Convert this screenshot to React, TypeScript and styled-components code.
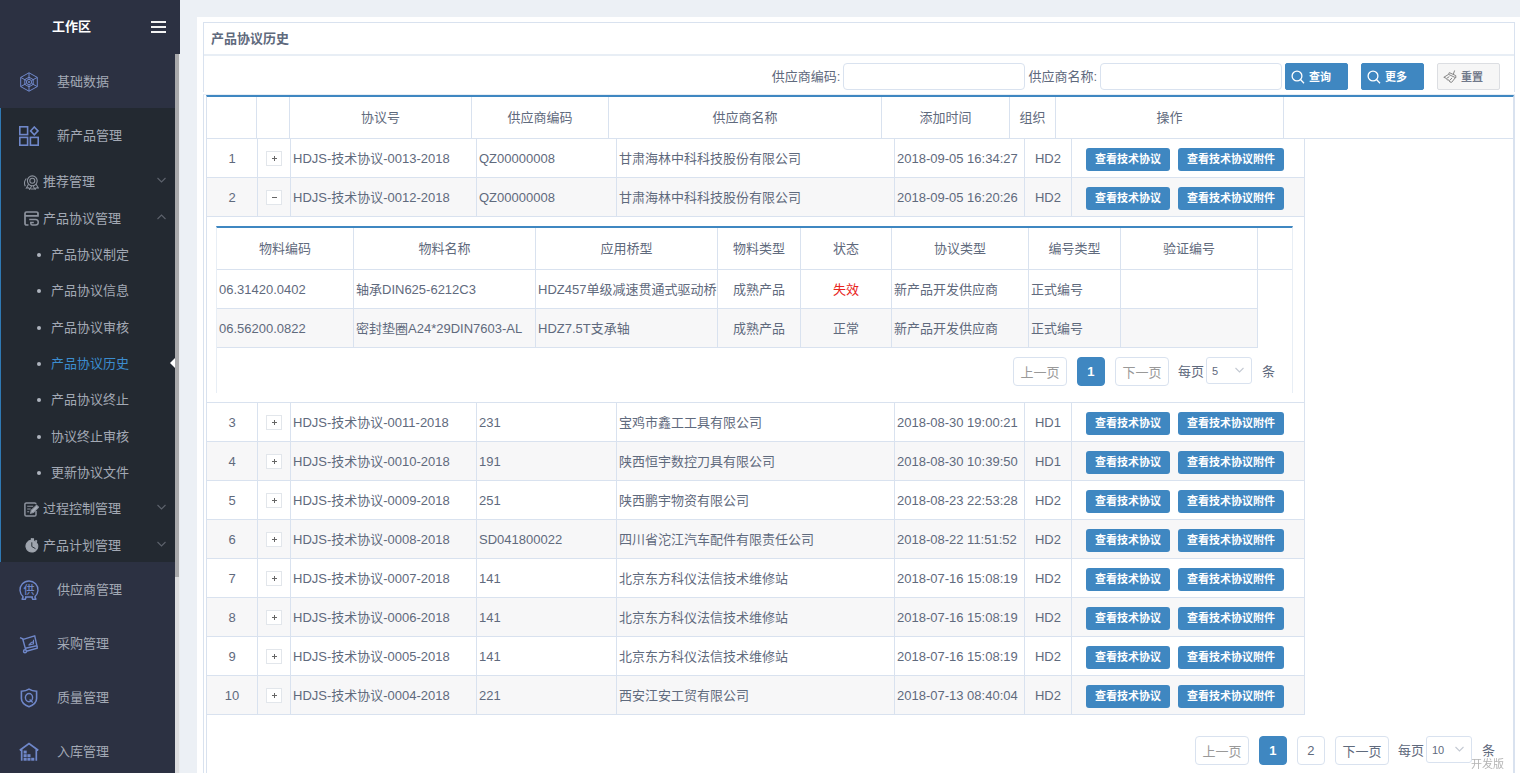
import React, { useState } from 'react';
import styled, { createGlobalStyle, css } from 'styled-components';

const c = {
  side: '#2c3142',
  sideDark: '#232931',
  sideText: '#a3a9b5',
  blue: '#3f87c1',
  text: '#5f6a7d',
  line: '#d9e2ef',
  soft: '#e8eef5',
  stripe: '#f7f7f8',
  icon: '#6f87c9',
};

const GlobalStyle = createGlobalStyle`
  *, *::before, *::after { box-sizing: border-box; }
  body {
    margin: 0;
    background: #ecf0f5;
    color: ${c.text};
    font-family: "Liberation Sans", "Noto Sans CJK SC", sans-serif;
    font-size: 13px;
    line-height: 18px;
  }
  button, input, select { font-family: inherit; color: inherit; margin: 0; }
  ul { list-style: none; margin: 0; padding: 0; }
  a { color: inherit; text-decoration: none; }
`;

const Shell = styled.div`
  display: flex;
  height: 100vh;
  overflow: hidden;
`;

/* ---------- sidebar ---------- */

const Sidebar = styled.aside`
  position: relative;
  display: flex;
  flex-direction: column;
  flex: none;
  width: 180px;
  background: ${c.side};
  color: ${c.sideText};
`;

const SideHead = styled.div`
  display: flex;
  align-items: center;
  justify-content: space-between;
  flex: none;
  height: 54px;
  padding: 0 14px 0 52px;
  color: #fff;
  font-weight: 700;
`;

const MenuToggle = styled.button`
  display: flex;
  padding: 0;
  border: 0;
  background: none;
`;

const Menu = styled.nav`
  flex: 1;
  min-height: 0;
  margin-right: 5px;
  overflow: hidden;
`;

const TopLink = styled.a`
  display: flex;
  align-items: center;
  gap: 18px;
  height: 54px;
  padding: 1px 0 0 19px;
  svg { flex: none; }
`;

const Group = styled.li<{ $open?: boolean }>`
  ${(p) => p.$open && css`
    background: ${c.sideDark};
    box-shadow: inset 1px 0 0 #2f79b3;
  `}
`;

const SubList = styled.ul`
  display: grid;
  grid-auto-rows: 1fr;
  height: 400px;
`;

const SubLink = styled.a`
  display: flex;
  align-items: center;
  gap: 4px;
  height: 100%;
  padding: 4px 9px 0 24px;
  svg { flex: none; }
  svg:last-child { margin: -4px 0 0 auto; }
`;

const LeafLink = styled.a<{ $active?: boolean }>`
  position: relative;
  display: flex;
  align-items: center;
  gap: 10px;
  height: 100%;
  padding: 4px 0 0 37px;
  color: ${(p) => (p.$active ? '#3c8dd0' : 'inherit')};
  &::before {
    content: '';
    width: 4px;
    height: 4px;
    border-radius: 2px;
    background: #aeb4be;
  }
`;

const ActiveMark = styled.span`
  position: absolute;
  right: 0;
  top: 14px;
  border: 5px solid transparent;
  border-left: 0;
  border-right-color: #fff;
`;

const ScrollTrack = styled.div`
  position: absolute;
  top: 54px;
  right: 0;
  bottom: 0;
  width: 5px;
  background: #dcdcde;
  border-right: 1px solid #e9ebee;
`;

const ScrollThumb = styled.div`
  height: 523px;
  background: #a9a9ab;
`;

/* ---------- content ---------- */

const Main = styled.main`
  flex: 1;
  min-width: 0;
  padding: 17px 0 0 17px;
  display: flex;
`;

const Sheet = styled.div`
  flex: 1;
  min-width: 0;
  padding: 5px 5px 0 6px;
  background: #fff;
`;

const Card = styled.section`
  border: 1px solid ${c.line};
  border-bottom: 0;
`;

const CardTitle = styled.h1`
  margin: 0;
  padding: 7px 7px 6px;
  border-bottom: 2px solid ${c.soft};
  font-size: 13px;
  line-height: 18px;
  font-weight: 700;
`;

const Filters = styled.form`
  display: flex;
  justify-content: flex-end;
  align-items: center;
  padding: 7px 14px 2px;
`;

const Field = styled.label`
  display: flex;
  align-items: center;
  gap: 3px;
  margin-right: 3px;
`;

const TextBox = styled.input`
  width: 182px;
  height: 27px;
  padding: 0 6px;
  border: 1px solid ${c.line};
  border-radius: 4px;
  font-size: 13px;
`;

const ToolButton = styled.button<{ $plain?: boolean }>`
  display: flex;
  align-items: center;
  gap: 4px;
  width: 63px;
  height: 27px;
  padding: 0 5px;
  border: 1px solid ${(p) => (p.$plain ? '#dcdee2' : c.blue)};
  border-radius: 2px;
  background: ${(p) => (p.$plain ? '#f6f6f6' : c.blue)};
  color: ${(p) => (p.$plain ? '#70788a' : '#fff')};
  font-size: 11px;
  line-height: 16px;
  font-weight: 700;
  white-space: nowrap;
  & + & { margin-left: 13px; }
`;

const GridBox = styled.section`
  margin-top: 2px;
  padding-left: 2px;
  border: 1px solid ${c.soft};
  border-color: ${c.soft} ${c.line} ${c.soft} ${c.line};
`;

const GridInner = styled.div`
  border-top: 2px solid ${c.blue};
  border-left: 1px solid ${c.line};
  border-right: 1px solid ${c.line};
  min-height: 100vh;
`;

const Table = styled.table<{ $full?: boolean }>`
  table-layout: fixed;
  border-collapse: separate;
  border-spacing: 0;
  width: ${(p) => (p.$full ? '100%' : '1px')};
`;

const Th = styled.th<{ $open?: boolean }>`
  height: 42px;
  padding: 0;
  border-bottom: 1px solid ${c.line};
  border-right: ${(p) => (p.$open ? 0 : `1px solid ${c.line}`)};
  font-weight: 400;
`;

const Tr = styled.tr<{ $striped?: boolean }>`
  background: ${(p) => (p.$striped ? c.stripe : '#fff')};
`;

const Td = styled.td<{ $center?: boolean; $open?: boolean; $alert?: boolean }>`
  height: 39px;
  padding: 2px 2px 0;
  border-right: 1px solid ${c.line};
  border-bottom: 1px solid ${c.line};
  text-align: ${(p) => (p.$center ? 'center' : 'left')};
  white-space: nowrap;
  overflow: hidden;
  ${(p) => p.$alert && css`color: #e8251c;`}
  ${(p) => p.$open && css`border: 0; background: #fff;`}
`;

const DetailCell = styled.td`
  padding: 9px 11px 9px 9px;
  border-right: 1px solid ${c.line};
  border-bottom: 1px solid ${c.line};
  background: #fff;
`;

const DetailBox = styled.div`
  border: 1px solid ${c.soft};
  border-top: 2px solid ${c.blue};
  border-bottom: 0;
`;

const Expander = styled.button`
  display: flex;
  align-items: center;
  justify-content: center;
  width: 16px;
  height: 15px;
  margin: 0 auto 2px;
  padding: 0;
  border: 1px solid #e2e6eb;
  background: #fff;
`;

const Actions = styled.div`
  display: flex;
  gap: 8px;
  padding-left: 12px;
`;

const ActionButton = styled.button`
  height: 23px;
  padding: 0 9px;
  border: 0;
  border-radius: 3px;
  background: ${c.blue};
  color: #fff;
  font-size: 11px;
  line-height: 16px;
  font-weight: 700;
`;

const PagerRow = styled.div<{ $nested?: boolean }>`
  display: flex;
  justify-content: flex-end;
  align-items: center;
  gap: 10px;
  padding: ${(p) => (p.$nested ? '9px 17px 7px 0' : '21px 18px 8px 0')};
`;

const PageButton = styled.button<{ $current?: boolean; $wide?: boolean }>`
  width: ${(p) => (p.$wide ? 54 : 28)}px;
  height: 29px;
  padding: 0;
  border: 1px solid ${(p) => (p.$current ? c.blue : c.line)};
  border-radius: 4px;
  background: ${(p) => (p.$current ? c.blue : '#fff')};
  color: ${(p) => (p.$current ? '#fff' : c.text)};
  font-size: 13px;
  font-weight: ${(p) => (p.$current ? 700 : 400)};
  &:disabled { color: #999; }
`;

const SizeField = styled.label`
  display: flex;
  align-items: center;
  gap: 2px;
  margin-left: -1px;
`;

const SelectWrap = styled.span`
  position: relative;
  display: flex;
  margin: 0 8px 2px 0;
  svg { position: absolute; right: 8px; top: 10px; pointer-events: none; }
`;

const Select = styled.select`
  appearance: none;
  width: 46px;
  height: 27px;
  padding: 0 5px;
  border: 1px solid ${c.line};
  border-radius: 3px;
  background: #fff;
  font-size: 11px;
`;

const Watermark = styled.div`
  position: fixed;
  right: 16px;
  bottom: 1px;
  color: #b4b4b4;
  font-size: 11px;
  line-height: 16px;
`;

/* ---------- icons ---------- */

const Top = ({ children }: { children: React.ReactNode }) => (
  <svg width="20" height="20" viewBox="0 0 20 20" fill="none" stroke={c.icon} strokeWidth="1.4" aria-hidden="true">
    {children}
  </svg>
);

const WebIcon = () => (
  <Top>
    <g strokeWidth="1">
      <path d="M10 .8 18.3 5.4v9.2L10 19.2 1.7 14.6V5.4z" />
      <path d="M10 .8V7M10 13v6.2M1.7 5.4 7.4 8.5M18.3 5.4 12.6 8.5M1.7 14.6l5.7-3.1M18.3 14.6l-5.7-3.1" />
      <path d="M10 5.2 14.2 7.6v4.8L10 14.8 5.8 12.4V7.6z" />
      <circle cx="10" cy="10" r="2.6" />
      <circle cx="10" cy="10" r=".7" />
    </g>
  </Top>
);

const BlocksIcon = () => (
  <Top>
    <g strokeWidth="1.6">
      <rect x=".8" y=".8" width="7.8" height="7.8" />
      <rect x=".8" y="11.4" width="7.8" height="7.8" />
      <rect x="11.4" y="11.4" width="7.8" height="7.8" />
      <path d="M15.3 1 19 4.9l-3.7 3.9-3.7-3.9z" />
    </g>
  </Top>
);

const SupplierIcon = () => (
  <Top>
    <path d="M4.3 16.900A9 9 0 1 1 15.700 16.900" />
    <path d="M6 17h8M2.500 19.300h3.800l1-2.300M17.500 19.300h-3.800l-1-2.300M3 19.200l1.300-2.600M17 19.200l-1.300-2.600" />
    <text x="10" y="13.800" textAnchor="middle" fontSize="11" fontWeight="500" fill={c.icon} stroke="none">供</text>
  </Top>
);

const CartIcon = () => (
  <Top>
    <path d="M1 3.600l2.700 1.200 3 11M4.200 5.300 15.700 1.800l2.200 9.800L6.600 14.200M7.300 17.200 18.200 14.300v-2.500" strokeWidth="1.400" />
    <path d="M9.500 11.200l5-1.300V5.800M9.700 11.100l2.600-2.600 2-.6" strokeWidth="1.100" />
    <circle cx="6" cy="17.300" r="1.500" />
  </Top>
);

const ShieldIcon = () => (
  <Top>
    <path d="M10 1.2C7.6 2.8 5 3.2 2.4 3.2v7.2c0 4 3.4 6.600 7.600 8.300 4.200-1.700 7.600-4.300 7.600-8.300V3.200C15 3.200 12.400 2.800 10 1.200z" strokeWidth="1.600" />
    <ellipse cx="10" cy="9.600" rx="3.600" ry="4.100" />
    <path d="m10.600 11.400 3.200 3.200" />
  </Top>
);

const WarehouseIcon = () => (
  <Top>
    <path d="M.8 8.200 10 1.500l9.200 6.700M2.700 7.500v11.300M17.300 7.500v11.300M.9 8.200h2M17.200 8.200h2" strokeWidth="1.700" />
    <g fill={c.icon} stroke="none">
      <rect x="4.600" y="8.600" width="3.100" height="2.900" />
      <rect x="4.600" y="12.200" width="3.100" height="2.900" />
      <rect x="8.400" y="12.200" width="3.100" height="2.900" />
      <rect x="4.600" y="15.800" width="3.100" height="2.900" />
      <rect x="8.400" y="15.800" width="3.100" height="2.900" />
      <rect x="12.200" y="15.800" width="3.100" height="2.900" />
    </g>
  </Top>
);

const Sub = ({ children }: { children: React.ReactNode }) => (
  <svg width="15" height="15" viewBox="0 0 15 15" fill="none" stroke="#8d939e" strokeWidth="1.100" aria-hidden="true">
    {children}
  </svg>
);

const MedalIcon = () => (
  <Sub>
    <circle cx="8.300" cy="5.800" r="4.900" />
    <circle cx="8.300" cy="5.800" r="2.500" />
    <path d="M4.500 9.300 2.400 13l2.300-.2 1 1.700 1.900-3.500M12.100 9.300l2.300 3.700-2.300-.2-1 1.700-2-3.500M2.300 3.500C.2 6 .2 9 1.300 11.300M7 14h3" />
  </Sub>
);

const ContractIcon = () => (
  <Sub>
    <path d="M4.500 14H2.500A1.500 1.500 0 0 1 1 12.500V2.500A1.500 1.500 0 0 1 2.500 1h10A1.500 1.500 0 0 1 14 2.500v2.300H1" strokeWidth="1.700" />
    <path d="M5.200 8.400h6.300a2.700 2.700 0 0 1 0 5.500H8.300a1.500 1.500 0 0 1-1.500-1.500v-.8h3" strokeWidth="1.500" />
  </Sub>
);

const EditIcon = () => (
  <Sub>
    <path d="M12 9v3.700a1.400 1.400 0 0 1-1.400 1.400H2.300A1.400 1.400 0 0 1 .9 12.700V2.300A1.400 1.400 0 0 1 2.300.9h8.300A1.400 1.400 0 0 1 12 2.300" strokeWidth="1.500" />
    <path d="M3.200 4.300h6M3.200 7h3.500M3.200 9.700h2" />
    <path d="m6.600 11.300.7-3 5.300-5 2 1.900-5.200 5.300z" fill="#a9afb9" />
  </Sub>
);

const PlanIcon = () => (
  <Sub>
    <path d="M7 2.300a5.900 5.900 0 1 0 6.600 4.400A6 6 0 0 0 9.500 2.700L7.800 1z" fill="#9fa5ae" stroke="#9fa5ae" />
    <path d="M7.800 4.300v4.200l3.700 2.200" stroke={c.sideDark} strokeWidth=".9" />
    <path d="M6.800 1h2.500v1.500M11.500 2.300l1.500 1.300" stroke="#9fa5ae" strokeWidth="1.500" />
  </Sub>
);

const Chevron = ({ up, color = '#5d626c' }: { up?: boolean; color?: string }) => (
  <svg width="9" height="6" viewBox="0 0 9 6" fill="none" stroke={color} strokeWidth="1.100" aria-hidden="true">
    <path d={up ? 'M.5 5 4.500 1l4 4' : 'M.5 1l4 4 4-4'} />
  </svg>
);

const SearchIcon = () => (
  <svg width="14" height="14" viewBox="0 0 14 14" fill="none" stroke="#fff" strokeWidth="1.300" aria-hidden="true">
    <circle cx="6" cy="6" r="4.900" />
    <path d="m9.500 9.500 3.500 3.700" />
  </svg>
);

const BroomIcon = () => (
  <svg width="14" height="14" viewBox="0 0 14 14" fill="none" stroke="#868686" strokeWidth="1" aria-hidden="true">
    <path d="M11.600.5 10.400 4M6.300 2.600l6.500 3v2.200L5.600 4.400zM5.600 4.400.8 7.300l2.500 1 .9 1.600 1.900.2.8 1.900 1.800.3 3.700-4.700M4 8.200 6.300 6.600M7 10.200l2-2.300" />
  </svg>
);

/* ---------- data ---------- */

type Agreement = [string, string, string, string, string];

const agreements: Agreement[] = [
  ['HDJS-技术协议-0013-2018', 'QZ00000008', '甘肃海林中科科技股份有限公司', '2018-09-05 16:34:27', 'HD2'],
  ['HDJS-技术协议-0012-2018', 'QZ00000008', '甘肃海林中科科技股份有限公司', '2018-09-05 16:20:26', 'HD2'],
  ['HDJS-技术协议-0011-2018', '231', '宝鸡市鑫工工具有限公司', '2018-08-30 19:00:21', 'HD1'],
  ['HDJS-技术协议-0010-2018', '191', '陕西恒宇数控刀具有限公司', '2018-08-30 10:39:50', 'HD1'],
  ['HDJS-技术协议-0009-2018', '251', '陕西鹏宇物资有限公司', '2018-08-23 22:53:28', 'HD2'],
  ['HDJS-技术协议-0008-2018', 'SD041800022', '四川省沱江汽车配件有限责任公司', '2018-08-22 11:51:52', 'HD2'],
  ['HDJS-技术协议-0007-2018', '141', '北京东方科仪法信技术维修站', '2018-07-16 15:08:19', 'HD2'],
  ['HDJS-技术协议-0006-2018', '141', '北京东方科仪法信技术维修站', '2018-07-16 15:08:19', 'HD2'],
  ['HDJS-技术协议-0005-2018', '141', '北京东方科仪法信技术维修站', '2018-07-16 15:08:19', 'HD2'],
  ['HDJS-技术协议-0004-2018', '221', '西安江安工贸有限公司', '2018-07-13 08:40:04', 'HD2'],
];

const materials = [
  ['06.31420.0402', '轴承DIN625-6212C3', 'HDZ457单级减速贯通式驱动桥', '成熟产品', '失效', '新产品开发供应商', '正式编号', ''],
  ['06.56200.0822', '密封垫圈A24*29DIN7603-AL', 'HDZ7.5T支承轴', '成熟产品', '正常', '新产品开发供应商', '正式编号', ''],
];

const headings = ['', '', '协议号', '供应商编码', '供应商名称', '添加时间', '组织', '操作'];
const headWidths = [50, 33, 182, 137, 273, 128, 46, 228];
const bodyWidths = [51, 33, 186, 140, 278, 130, 47, 233];
const detailHeadings = ['物料编码', '物料名称', '应用桥型', '物料类型', '状态', '协议类型', '编号类型', '验证编号'];
const detailWidths = [137, 182, 182, 83, 91, 137, 92, 137];

const leaves = ['产品协议制定', '产品协议信息', '产品协议审核', '产品协议历史', '产品协议终止', '协议终止审核', '更新协议文件'];

/* ---------- parts ---------- */

const Cols = ({ widths, rest }: { widths: number[]; rest?: boolean }) => (
  <colgroup>
    {widths.map((w, i) => <col key={i} width={w} />)}
    {rest && <col />}
  </colgroup>
);

function Pager({ pages, size, nested }: { pages: number; size: string; nested?: boolean }) {
  const numbers = Array.from({ length: pages }, (_, i) => i + 1);
  return (
    <PagerRow $nested={nested}>
      <PageButton $wide disabled>上一页</PageButton>
      {numbers.map((n) => <PageButton key={n} $current={n === 1}>{n}</PageButton>)}
      <PageButton $wide disabled={pages === 1}>下一页</PageButton>
      <SizeField>
        每页
        <SelectWrap>
          <Select defaultValue={size}>
            <option>5</option>
            <option>10</option>
            <option>20</option>
          </Select>
          <Chevron color="#c3c9d2" />
        </SelectWrap>
        条
      </SizeField>
    </PagerRow>
  );
}

function Detail() {
  return (
    <DetailBox>
      <Table $full>
        <Cols widths={detailWidths} rest />
        <thead>
          <tr>
            {detailHeadings.map((h) => <Th key={h}>{h}</Th>)}
            <Th $open />
          </tr>
        </thead>
        <tbody>
          {materials.map((m, r) => (
            <Tr key={m[0]} $striped={r % 2 === 1}>
              {m.map((v, i) => (
                <Td key={i} $center={i === 3 || i === 4} $alert={v === '失效'}>{v}</Td>
              ))}
              <Td $open />
            </Tr>
          ))}
        </tbody>
      </Table>
      <Pager pages={1} size="5" nested />
    </DetailBox>
  );
}

function SideMenu() {
  return (
    <Sidebar>
      <SideHead>
        工作区
        <MenuToggle aria-label="菜单">
          <svg width="15" height="12" viewBox="0 0 15 12" stroke="#f2f2f2" strokeWidth="2" aria-hidden="true">
            <path d="M0 1h15M0 6h15M0 11h15" />
          </svg>
        </MenuToggle>
      </SideHead>
      <Menu>
        <ul>
          <li><TopLink href="#base"><WebIcon />基础数据</TopLink></li>
          <Group $open>
            <TopLink href="#product"><BlocksIcon />新产品管理</TopLink>
            <SubList>
              <li><SubLink href="#recommend"><MedalIcon />推荐管理<Chevron /></SubLink></li>
              <li><SubLink href="#agreement"><ContractIcon />产品协议管理<Chevron up /></SubLink></li>
              {leaves.map((l) => (
                <li key={l}>
                  <LeafLink href={`#${l}`} $active={l === '产品协议历史'}>
                    {l}
                    {l === '产品协议历史' && <ActiveMark />}
                  </LeafLink>
                </li>
              ))}
              <li><SubLink href="#process"><EditIcon />过程控制管理<Chevron /></SubLink></li>
              <li><SubLink href="#plan"><PlanIcon />产品计划管理<Chevron /></SubLink></li>
            </SubList>
          </Group>
          <li><TopLink href="#supplier"><SupplierIcon />供应商管理</TopLink></li>
          <li><TopLink href="#purchase"><CartIcon />采购管理</TopLink></li>
          <li><TopLink href="#quality"><ShieldIcon />质量管理</TopLink></li>
          <li><TopLink href="#inbound"><WarehouseIcon />入库管理</TopLink></li>
        </ul>
      </Menu>
      <ScrollTrack><ScrollThumb /></ScrollTrack>
    </Sidebar>
  );
}

export default function App() {
  const [openRow, setOpenRow] = useState(1);

  return (
    <Shell>
      <GlobalStyle />
      <SideMenu />
      <Main>
        <Sheet>
          <Card>
            <CardTitle>产品协议历史</CardTitle>
            <Filters onSubmit={(e) => e.preventDefault()}>
              <Field>供应商编码:<TextBox type="text" /></Field>
              <Field>供应商名称:<TextBox type="text" /></Field>
              <ToolButton type="submit"><SearchIcon />查询</ToolButton>
              <ToolButton type="button"><SearchIcon />更多</ToolButton>
              <ToolButton type="reset" $plain><BroomIcon />重置</ToolButton>
            </Filters>
          </Card>
          <GridBox>
            <GridInner>
              <Table $full>
                <Cols widths={headWidths} rest />
                <thead>
                  <tr>
                    {headings.map((h, i) => <Th key={i}>{h}</Th>)}
                    <Th $open />
                  </tr>
                </thead>
              </Table>
              <Table>
                <Cols widths={bodyWidths} />
                <tbody>
                  {agreements.map((a, r) => (
                    <React.Fragment key={a[0]}>
                      <Tr $striped={r % 2 === 1}>
                        <Td $center>{r + 1}</Td>
                        <Td $center>
                          <Expander
                            aria-label={openRow === r ? '收起' : '展开'}
                            onClick={() => setOpenRow(openRow === r ? -1 : r)}
                          >
                            <svg width="5" height="5" viewBox="0 0 5 5" stroke="#666" aria-hidden="true">
                              <path d={openRow === r ? 'M0 2.500h5' : 'M0 2.500h5M2.500 0v5'} />
                            </svg>
                          </Expander>
                        </Td>
                        <Td>{a[0]}</Td>
                        <Td>{a[1]}</Td>
                        <Td>{a[2]}</Td>
                        <Td>{a[3]}</Td>
                        <Td $center>{a[4]}</Td>
                        <Td>
                          <Actions>
                            <ActionButton>查看技术协议</ActionButton>
                            <ActionButton>查看技术协议附件</ActionButton>
                          </Actions>
                        </Td>
                      </Tr>
                      {openRow === r && (
                        <tr>
                          <DetailCell colSpan={8}><Detail /></DetailCell>
                        </tr>
                      )}
                    </React.Fragment>
                  ))}
                </tbody>
              </Table>
              <Pager pages={2} size="10" />
            </GridInner>
          </GridBox>
        </Sheet>
      </Main>
      <Watermark>开发版</Watermark>
    </Shell>
  );
}
